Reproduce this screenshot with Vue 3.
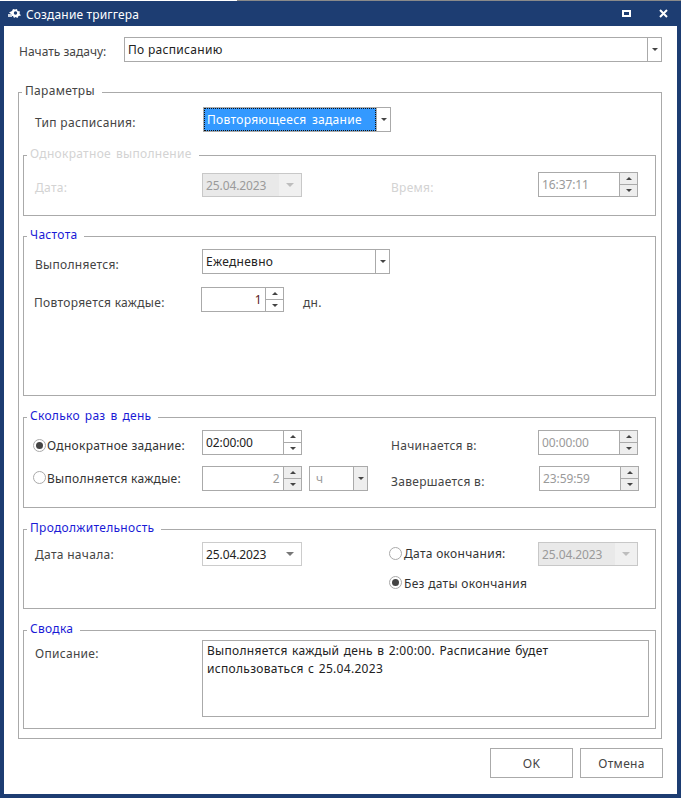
<template>
  <div class="dialog">
    <div class="topline"></div>
    <div class="titlebar">
      <svg class="ticon" width="16" height="14" viewBox="0 0 16 14">
        <path d="M2 5.500 5 4l1-2 2 .5 2-.5.5 2 2.500.5-.5 2 1.500 2-2.500.5-1 2-2-1-1.500 1L6 9 3.500 9 4 7z" fill="#fff" />
        <circle cx="8.500" cy="6" r="1.700" fill="#1d3d72" />
        <path d="M1 7h4v3H1z" fill="#c9d2e0" />
      </svg>
      <span class="ttext">Создание триггера</span>
      <span class="tfill"></span>
      <span class="maxbtn"></span>
      <svg class="closebtn" width="9" height="9" viewBox="0 0 9 9">
        <path d="M1 1l7 7M8 1 1 8" stroke="#fff" stroke-width="2" fill="none" />
      </svg>
    </div>

    <div class="content">
      <div class="startrow">
        <span class="startlabel">Начать задачу:</span>
        <div class="ctl h25 startcombo">
          <span class="val">По расписанию</span>
          <span class="dropbtn"><i class="down"></i></span>
        </div>
      </div>

      <div class="group outer">
        <span class="legend leg-outer">Параметры</span>
        <div class="row typerow">
          <span class="lbl w168">Тип расписания:</span>
          <div class="ctl h25 typecombo">
            <span class="selected">Повторяющееся задание</span>
            <span class="dropbtn"><i class="down"></i></span>
          </div>
        </div>

        <div class="group g-once">
          <span class="legend off">Однократное выполнение</span>
          <div class="row once-row">
            <span class="lbl w167 off">Дата:</span>
            <div class="ctl date offdate">
              <span class="val num grey">25.04.2023</span>
              <span class="datebtn"><i class="down pale"></i></span>
            </div>
            <span class="lbl mid off">Время:</span>
            <div class="ctl h25 spin">
              <span class="val num grey">16:37:11</span>
              <span class="spinbtns shade"><b><i class="up"></i></b><b><i class="down"></i></b></span>
            </div>
          </div>
        </div>

        <div class="group g-freq">
          <span class="legend blue">Частота</span>
          <div class="row freq1">
            <span class="lbl w167">Выполняется:</span>
            <div class="ctl h25 freqcombo">
              <span class="val">Ежедневно</span>
              <span class="dropbtn"><i class="down"></i></span>
            </div>
          </div>
          <div class="row freq2">
            <span class="lbl w167">Повторяется каждые:</span>
            <div class="ctl h25 spin-small">
              <span class="val right dark">1</span>
              <span class="spinbtns"><b><i class="up"></i></b><b><i class="down"></i></b></span>
            </div>
            <span class="lbl unit">дн.</span>
          </div>
        </div>

        <div class="group g-times">
          <span class="legend blue">Сколько раз в день</span>
          <div class="row times1">
            <span class="radio on"></span>
            <span class="lbl radiolabel w155">Однократное задание:</span>
            <div class="ctl h25 spin">
              <span class="val num">02:00:00</span>
              <span class="spinbtns"><b><i class="up"></i></b><b><i class="down"></i></b></span>
            </div>
            <span class="lbl mid2">Начинается в:</span>
            <div class="ctl h25 spin">
              <span class="val num grey">00:00:00</span>
              <span class="spinbtns shade"><b><i class="up"></i></b><b><i class="down"></i></b></span>
            </div>
          </div>
          <div class="row times2">
            <span class="radio"></span>
            <span class="lbl radiolabel w155">Выполняется каждые:</span>
            <div class="ctl h25 spin">
              <span class="val right grey">2</span>
              <span class="spinbtns shade"><b><i class="up"></i></b><b><i class="down"></i></b></span>
            </div>
            <div class="ctl h25 unitcombo">
              <span class="val grey">ч</span>
              <span class="dropbtn shade"><i class="down"></i></span>
            </div>
            <span class="lbl mid3">Завершается в:</span>
            <div class="ctl h25 spin">
              <span class="val num grey">23:59:59</span>
              <span class="spinbtns shade"><b><i class="up"></i></b><b><i class="down"></i></b></span>
            </div>
          </div>
        </div>

        <div class="group g-dur">
          <span class="legend blue">Продолжительность</span>
          <div class="row dur1">
            <span class="lbl w167">Дата начала:</span>
            <div class="ctl date ondate">
              <span class="val num">25.04.2023</span>
              <span class="datebtn"><i class="down"></i></span>
            </div>
            <span class="radio r-end"></span>
            <span class="lbl radiolabel w134">Дата окончания:</span>
            <div class="ctl date offdate">
              <span class="val num grey">25.04.2023</span>
              <span class="datebtn"><i class="down pale"></i></span>
            </div>
          </div>
          <div class="row dur2">
            <span class="radio on"></span>
            <span class="lbl radiolabel">Без даты окончания</span>
          </div>
        </div>

        <div class="group g-sum">
          <span class="legend blue">Сводка</span>
          <div class="row sum1">
            <span class="lbl w167">Описание:</span>
            <div class="ctl memo">Выполняется каждый день в 2:00:00. Расписание будет использоваться с 25.04.2023</div>
          </div>
        </div>
      </div>

      <div class="buttons">
        <span class="btn">OK</span>
        <span class="btn">Отмена</span>
      </div>
    </div>
  </div>
</template>

<script setup>
</script>

<style scoped>
.dialog {
  width: 681px;
  height: 798px;
  display: flex;
  flex-direction: column;
  background: #1d3d72;
  box-sizing: border-box;
  padding: 0 4px 4px;
  font-family: "Noto Sans", sans-serif;
  font-size: 12px;
  color: #444;
  overflow: hidden;
}
.topline {
  height: 1px;
  flex: none;
  margin: 0 -4px;
  background: linear-gradient(90deg, #fff 237px, #8a8a8a 237px);
}
.titlebar {
  height: 25px;
  margin: 0 -4px;
  display: flex;
  align-items: center;
  color: #fff;
  flex: none;
}
.ticon { margin-left: 7px; }
.ttext { margin-left: 3px; padding-top: 2px; letter-spacing: 0.15px; }
.tfill { flex: 1; }
.maxbtn {
  border: 2px solid #fff;
  box-sizing: content-box;
  width: 5px;
  height: 3px;
  margin-right: 28px;
}
.closebtn { margin-right: 13px; }
.content {
  flex: 1;
  background: #fff;
  padding: 11px 14px 0 14px;
}
.startrow {
  display: flex;
  align-items: center;
  height: 25px;
  padding-left: 1px;
}
.startlabel { width: 105px; padding-top: 4px; }
.ctl {
  box-sizing: border-box;
  border: 1px solid #aaa;
  background: #fff;
  display: flex;
  color: #222;
}
.h25 { height: 25px; }
.val { flex: 1; padding: 3px 3px 0 3px; line-height: 18px; letter-spacing: 0.3px; }
.num { letter-spacing: -0.1px; }
.right { text-align: right; }
.grey { color: #9a9a9a; }
.dark { color: #5a1a1a; }
.startcombo { width: 538px; }
.dropbtn {
  width: 13px;
  border-left: 1px solid #aaa;
  display: flex;
  align-items: center;
  justify-content: center;
  flex: none;
}
.shade { background: #eee; }
i.down, i.up {
  width: 0;
  height: 0;
  border-left: 3px solid transparent;
  border-right: 3px solid transparent;
  display: block;
}
i.down { border-top: 3px solid #444; }
i.up { border-bottom: 3px solid #444; }
.datebtn i.down {
  border-left-width: 4px;
  border-right-width: 4px;
  border-top-width: 4px;
  border-top-color: #777;
}
.datebtn i.pale { border-top-color: #bdbdbd; }

.group {
  position: relative;
  border: 1px solid #aaa;
  box-sizing: border-box;
}
.legend {
  position: absolute;
  top: -11px;
  left: 3px;
  padding: 0 7px 0 3px;
  background: #fff;
  line-height: 18px;
  letter-spacing: 0.3px;
  word-spacing: 1.5px;
}
.off { color: #d3d3d3; }
.blue { color: #1a1ad6; }
.outer {
  margin-top: 30px;
  height: 647px;
  width: 644px;
  padding: 0 5px 0 4px;
}
.row { display: flex; align-items: flex-start; }
.lbl { flex: none; letter-spacing: 0.3px; line-height: 18px; padding-top: 7px; }
.w168 { width: 168px; margin-left: 12px; }
.w167 { width: 167px; margin-left: 11px; }
.typerow { margin-top: 14px; }
.typecombo { width: 188px; }
.selected {
  flex: 1;
  background: #3399ff;
  color: #fff;
  outline: 1px dotted #111;
  outline-offset: -1px;
  padding: 3px 3px 0;
  line-height: 18px;
  letter-spacing: 0.3px;
  word-spacing: 2px;
}
.g-once { margin-top: 23px; height: 61px; }
.once-row { margin-top: 16px; }
.date {
  width: 100px;
  height: 24px;
}
.once-row .date { margin-top: 1px; }
.datebtn {
  width: 22px;
  flex: none;
  display: flex;
  align-items: center;
  justify-content: center;
}
.offdate { background: #e9e9e9; border-color: #c8c8c8; }
.offdate .datebtn { background: #f0f0f0; }
.ondate { border-color: #ccc; }
.mid { margin-left: 89px; width: 147px; }
.spin { width: 100px; }
.spin-small { width: 83px; }
.spinbtns {
  width: 17px;
  flex: none;
  border-left: 1px solid #aaa;
  display: flex;
  flex-direction: column;
}
.spinbtns b {
  flex: 1;
  display: flex;
  align-items: center;
  justify-content: center;
}
.spinbtns b + b { border-top: 1px solid #aaa; }
.g-freq { margin-top: 20px; height: 160px; }
.freq1 { margin-top: 12px; }
.freqcombo { width: 188px; }
.freq2 { margin-top: 13px; margin-left: -1px; }
.unit { margin-left: 19px; }
.g-times { margin-top: 21px; height: 91px; }
.times1 { margin-top: 12px; }
.times2 { margin-top: 11px; }
.times2 > .radio { margin-top: 5px; }
.times2 > .radiolabel { padding-top: 4px; }
.radio {
  flex: none;
  box-sizing: border-box;
  width: 13px;
  height: 13px;
  margin: 9px 1px 0 9px;
  border: 1px solid #aaa;
  border-radius: 50%;
  background: #fff;
  display: flex;
  align-items: center;
  justify-content: center;
}
.radio.on::after {
  content: "";
  width: 7px;
  height: 7px;
  border-radius: 50%;
  background: #444;
}
.radiolabel { color: #333; }
.w155 { width: 155px; }
.unitcombo { width: 59px; margin-left: 7px; }
.unitcombo .val { padding-left: 6px; }
.mid2 { margin-left: 89px; width: 147px; }
.mid3 { margin-left: 23px; width: 148px; }
.g-dur { margin-top: 21px; height: 80px; }
.dur1 { margin-top: 12px; height: 25px; }
.dur1 > .w167 { padding-top: 4px; }
.r-end { margin-right: 2px; margin-top: 5px; margin-left: 87px; }
.w134 { width: 134px; padding-top: 3px; }
.dur2 { margin-left: 356px; }
.dur2 > .radio { margin-left: 9px; margin-right: 2px; margin-top: 9px; }
.dur2 > .radiolabel { padding-top: 8px; }
.g-sum { margin-top: 21px; height: 99px; }
.sum1 { margin-top: 9px; }
.sum1 .lbl { padding-top: 5px; }
.memo {
  display: block;
  width: 447px;
  height: 77px;
  padding: 1px 14px 1px 4px;
  line-height: 18px;
  letter-spacing: 0.3px;
  word-spacing: 1px;
}
.buttons {
  display: flex;
  justify-content: flex-end;
  gap: 7px;
  margin-top: 9px;
}
.btn {
  box-sizing: border-box;
  width: 83px;
  height: 30px;
  border: 1px solid #aaa;
  display: flex;
  align-items: center;
  justify-content: center;
  letter-spacing: 0.3px;
  padding-top: 1px;
}
</style>
